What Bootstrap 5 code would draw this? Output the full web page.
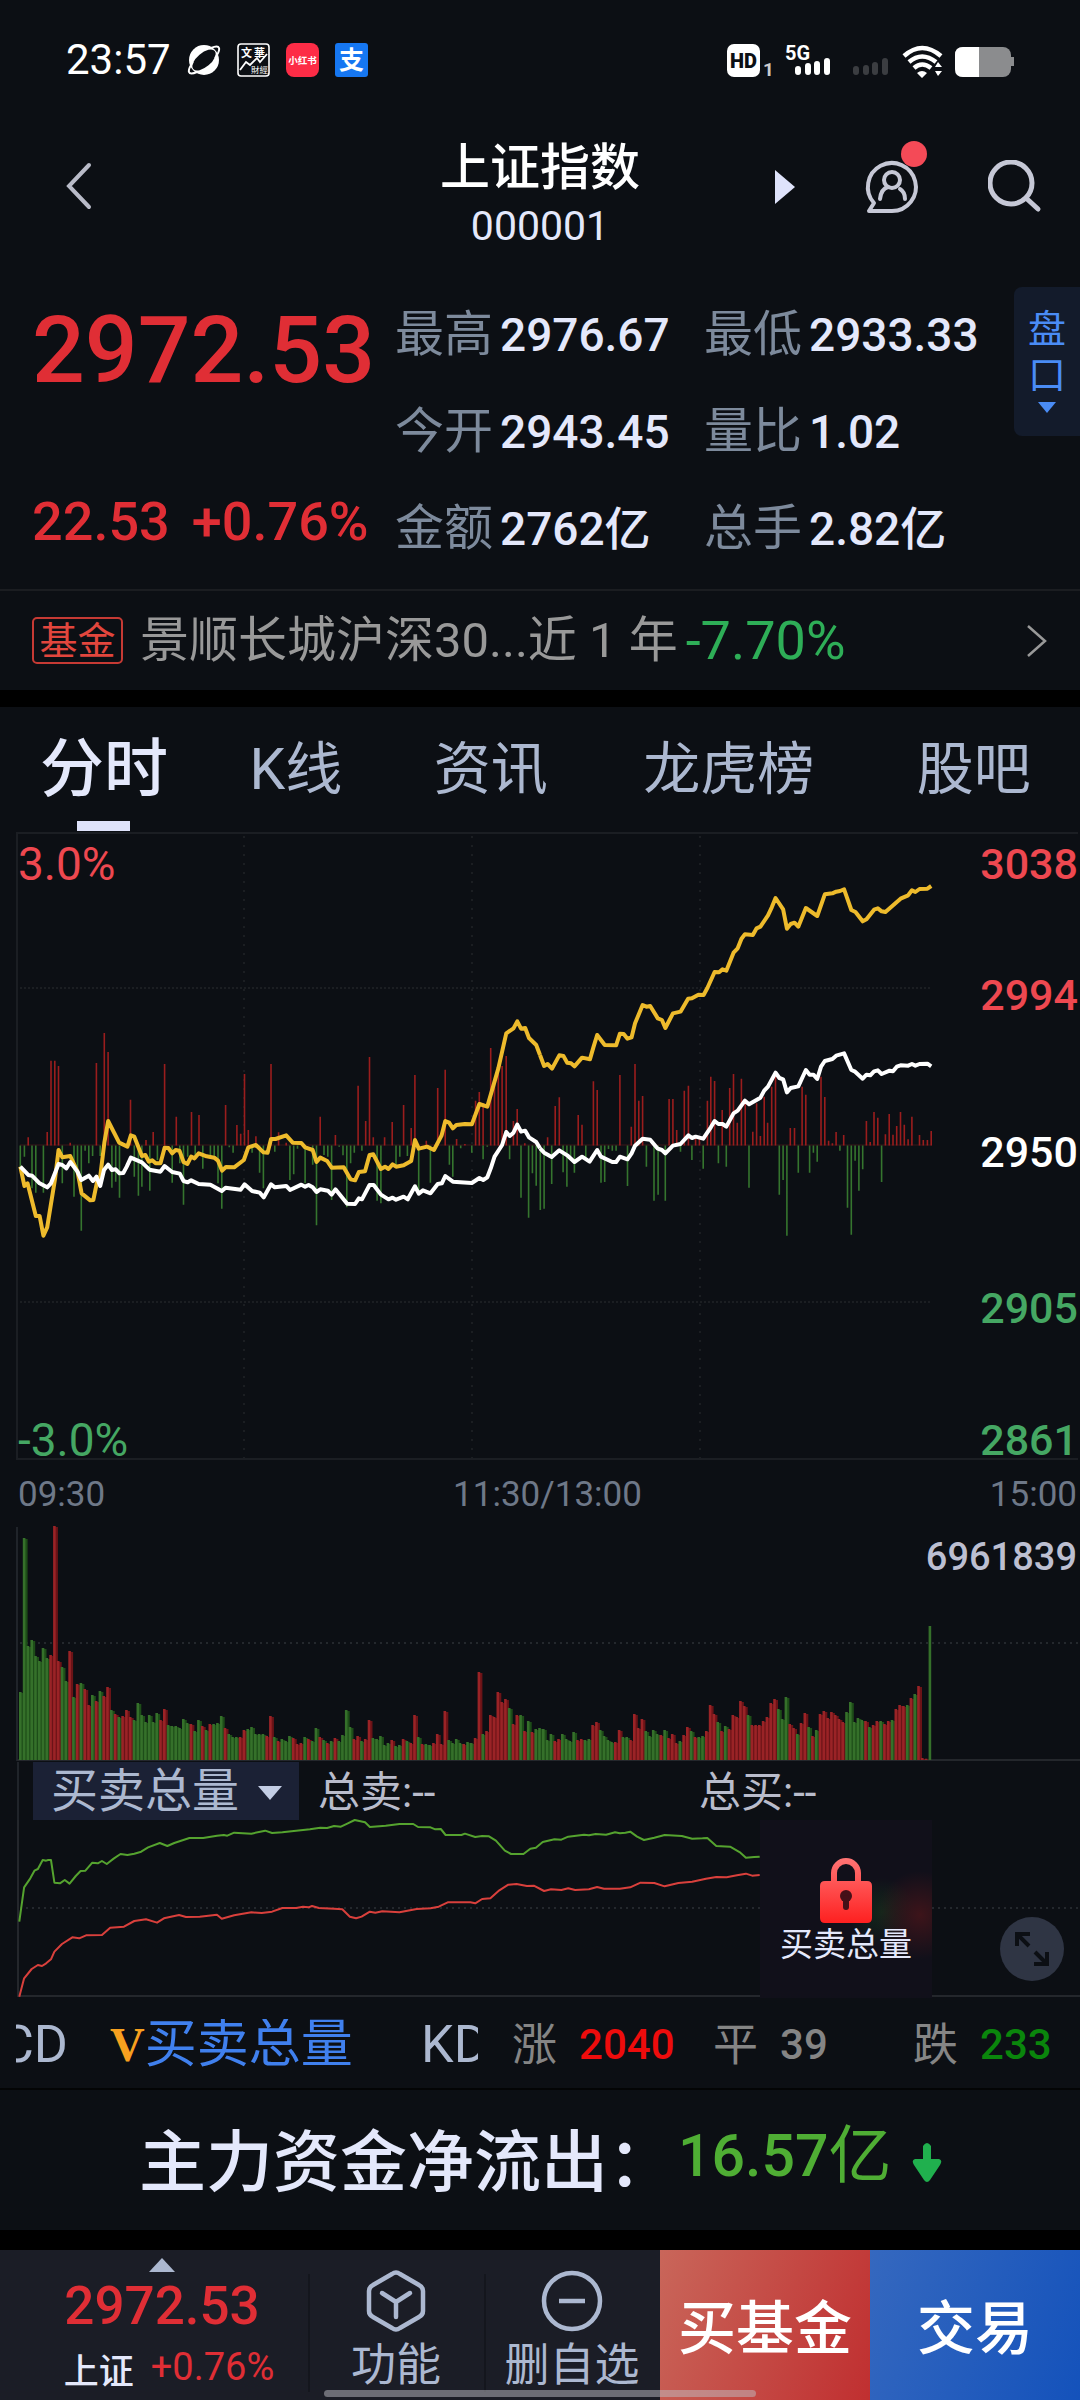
<!DOCTYPE html>
<html lang="zh-CN" data-bs-theme="dark">
<head>
<meta charset="utf-8">
<meta name="viewport" content="width=device-width, initial-scale=1">
<title>上证指数 000001</title>
<link href="https://cdn.jsdelivr.net/npm/bootstrap@5.3.0/dist/css/bootstrap.min.css" rel="stylesheet">
<style>
  :root { --ink:#e4e8fb; --muted:#7d8a9c; --soft:#acb8d0; --up:#e02e35; --panel:#0c0f14; }
  body { background:var(--panel); color:var(--ink); font-family:Roboto,"Noto Sans CJK SC",sans-serif; font-size:42px; line-height:1; }
  svg { display:block; flex:none; }
  a, button { color:inherit; text-decoration:none; line-height:1; }
  button { background:none; border:0; padding:0; }
  .statusbar { height:120px; padding:0 64px 0 66px; color:#fff; }
  .topbar { height:130px; display:grid; grid-template-columns:1fr 220px 1fr; }
  .topbar h1 { font-size:50px; line-height:62px; font-weight:500; }
  .topbar .code-no { font-size:41px; line-height:54px; }
  .topbar .end-tools { gap:62px; padding-right:38px; }
  .quote { padding:36px 0 14px 32px; height:341px; border-bottom:2px solid #1b1d21; }
  .quote-main { width:363px; color:var(--up); font-weight:500; }
  .price-lg { font-size:93px; line-height:130px; }
  .price-chg { font-size:54px; line-height:60px; margin-top:76px; gap:22px; }
  .facts { display:grid; grid-template-columns:309px 300px; grid-auto-rows:97px; margin:0; }
  .facts > div { display:flex; align-items:center; gap:7px; }
  .facts dt { font-size:49px; font-weight:400; color:var(--muted); }
  .facts dd { font-size:46px; font-weight:500; margin:0; }
  .side-tab { width:66px; height:149px; background:#131b2b; color:#4a8cf5; font-size:38px; border-radius:8px 0 0 8px; gap:8px; margin-left:auto; margin-top:1px; }
  .fund { height:99px; padding:0 32px; font-size:49px; color:#999; }
  .fund-tag { font-size:38px; color:#e2463d; border:2px solid #c63a34; border-radius:5px; width:91px; height:47px; }
  .fund-loss { color:#2eae57; font-size:54px; }
  .gapbar { background:#000; }
  .tabs { height:125px; display:grid; grid-template-columns:209fr 184fr 209fr 273fr 163fr; padding-left:40px; color:var(--soft); font-size:57px; }
  .tabs a { display:flex; align-items:center; position:relative; }
  .tabs .on { color:var(--ink); font-size:64px; font-weight:500; }
  .tabs .on::after { content:""; position:absolute; left:37px; bottom:1px; width:53px; height:10px; background:#dfe3fb; }
  .plot > svg { width:100%; height:auto; }
  .plot > svg path, .plot > svg polyline { fill:none; vector-effect:non-scaling-stroke; }
  .axis { position:absolute; top:8px; display:grid; grid-template-rows:131px 157px 156px 132px 48px; font-weight:500; font-size:43px; line-height:48px; }
  .axis-pct { font-size:46px; font-weight:400; }
  .red-t { color:#ee4850; } .green-t { color:#45a763; }
  .times { height:65px; padding:3px 3px 0 18px; font-size:35px; color:#6e7888; display:grid; grid-template-columns:1fr auto 1fr; align-items:center; }
  .vol-max { position:absolute; right:3px; top:10px; font-size:38px; line-height:44px; color:#bcbfd1; font-weight:500; }
  .legend-row { height:58px; margin-left:17px; border-left:2px solid #20242a; padding-left:14px; font-size:42px; color:#b9bccb; display:grid; grid-template-columns:285px 381px 1fr; align-items:center; }
  .legend-row > span { padding-top:4px; }
  .pick { width:266px; height:58px; background:#1b2135; color:var(--soft); font-size:47px; line-height:58px; border:0; border-radius:0; appearance:none; padding:0 0 0 18px; }
  .pick-arrow { position:absolute; left:225px; top:24px; pointer-events:none; }
  .lock-box { position:absolute; left:760px; top:0; width:172px; height:178px; background:radial-gradient(circle at 160px 95px,#3d141a 0,transparent 44px),radial-gradient(circle at 122px 92px,#12281b 0,transparent 34px),#11101a; font-size:33px; padding-top:38px; gap:4px; color:var(--ink); }
  .grow-btn { position:absolute; right:16px; top:97px; width:64px; height:64px; border-radius:50%; background:#2f3544; }
  .strip { height:92px; padding:4px 0 0 16px; border-bottom:2px solid #030405; }
  .scroller { width:462px; overflow:hidden; white-space:nowrap; font-size:52px; color:var(--soft); }
  .scroller .prev-ind { margin-left:-16px; width:110px; }
  .scroller .cur-ind { color:#4080ee; width:311px; }
  .vmark { font-family:"Liberation Serif",serif; font-weight:700; font-size:48px; color:#f7a01f; }
  .counts { display:grid; grid-template-columns:201px 200px 1fr; margin-left:34px; font-size:45px; color:#858585; }
  .counts span { display:flex; align-items:center; gap:22px; }
  .counts b { font-weight:500; font-size:42px; }
  .netflow { height:140px; padding:6px 0 0 139px; font-size:67px; font-weight:500; }
  .netflow .amt { color:#4fae34; font-size:59px; padding-bottom:16px; margin-left:3px; }
  .netflow .amt span { font-size:63px; font-weight:400; }
  .netflow svg { margin-left:20px; }
  .dock { height:150px; background:#1b1d26; color:var(--soft); }
  .dock-idx { width:308px; color:var(--up); padding:8px 0 0 16px; }
  .dock-idx .val { font-size:53px; line-height:68px; font-weight:500; }
  .dock-idx .sub { font-size:38px; line-height:54px; gap:17px; font-weight:400; padding-left:14px; }
  .dock-idx .sub span { color:var(--ink); font-size:35px; padding-top:6px; font-weight:500; }
  .dock-btn { width:176px; font-size:45px; position:relative; padding-top:20px; gap:11px; }
  .dock-btn::before { content:""; position:absolute; left:0; top:24px; bottom:8px; width:2px; background:#14161d; }
  .cta { flex:1; color:#fff; font-size:58px; font-weight:500; padding-top:8px; }
  .cta-fund { background:linear-gradient(110deg,#c9665a,#c02f30); }
  .cta-trade { background:linear-gradient(110deg,#3568bf,#1452bb); }
  .homebar { position:absolute; left:30%; width:40%; bottom:3px; height:7px; border-radius:4px; background:rgba(190,190,195,.5); }
</style>
<script src="https://cdn.jsdelivr.net/npm/bootstrap@5.3.0/dist/js/bootstrap.bundle.min.js"></script>
</head>
<body>

<div class="statusbar d-flex align-items-center">
  <span>23:57</span>
  <div class="d-flex align-items-center ms-3" style="gap:16px">
    <svg width="34" height="34" viewBox="0 0 34 34"><circle cx="17" cy="17" r="15" fill="#fff"/><ellipse cx="17" cy="17" rx="14" ry="7" transform="rotate(-40 17 17)" fill="#0c0f14"/><path d="M24 5Q31 2 32 5T28 15M10 29Q3 32 2 29T6 19" stroke="#fff" stroke-width="2" fill="none"/></svg>
    <svg width="33" height="34" viewBox="0 0 33 34"><rect x="1" y="1" width="31" height="32" rx="3" fill="none" stroke="#fff" stroke-width="1.6"/><text x="4" y="14" font-size="11" font-weight="700" fill="#fff">文</text><text x="17" y="14" font-size="11" font-weight="700" fill="#fff">華</text><path d="M3 27L9 19L13 22L20 15L23 19L30 11" stroke="#fff" stroke-width="1.8" fill="none"/><text x="14" y="30" font-size="8.5" fill="#fff">財經</text></svg>
    <svg width="33" height="34" viewBox="0 0 33 34"><rect width="33" height="34" rx="8" fill="#fd2c46"/><text x="16.500" y="21" text-anchor="middle" font-size="9.500" font-weight="700" fill="#fff">小红书</text></svg>
    <svg width="33" height="34" viewBox="0 0 33 34"><rect width="33" height="34" rx="3" fill="#1677f2"/><text x="16.500" y="26" text-anchor="middle" font-size="25" font-weight="700" fill="#fff">支</text></svg>
  </div>
  <svg class="ms-auto" width="290" height="42" viewBox="726 38 290 42">
    <rect x="727" y="43" width="33" height="33" rx="7" fill="#fff"/><text x="743.500" y="67" text-anchor="middle" font-size="20" font-weight="900" fill="#0c0f14">HD</text>
    <text x="763" y="75" font-size="19" font-weight="700" fill="#ccc">1</text>
    <text x="785" y="59" font-size="20" font-weight="700" fill="#fff">5G</text>
    <g stroke="#fff" stroke-width="6" stroke-linecap="round"><path d="M798 68v3M808 65v6M817 63v8M827 60v11"/><path stroke="#3b3d41" d="M856 68v3M866 67v4M875 64v7M885 60v11"/></g>
    <g fill="none" stroke="#fff" stroke-width="4.500"><path d="M904 55Q922 39 941 55"/><path d="M909 61Q922 50 936 61"/><path d="M914 67Q922 60 931 67"/></g>
    <path d="M917 72Q922 68 927 72L922 77ZM935 66L938 61L942 66ZM935 70H942L938 75Z" fill="#fff"/>
    <rect x="955" y="46" width="56" height="30" rx="8" fill="#8b8c8e"/><path d="M979 46h-16q-8 0-8 8v14q0 8 8 8h16z" fill="#fff"/><path d="M1011 56h3v9h-3z" fill="#8b8c8e"/>
  </svg>
</div>

<header class="topbar">
  <div class="d-flex align-items-center" style="padding-left:64px;padding-bottom:2px">
    <button type="button" aria-label="返回"><svg width="30" height="48" viewBox="0 0 30 48"><path d="M25 3L5 24L25 45" fill="none" stroke="#b9bbc8" stroke-width="4" stroke-linecap="round"/></svg></button>
  </div>
  <div class="text-center" style="padding-top:17px">
    <h1 class="m-0">上证指数</h1>
    <div class="code-no">000001</div>
  </div>
  <div class="end-tools d-flex align-items-center justify-content-end">
    <button type="button" aria-label="下一只"><svg width="22" height="34" viewBox="0 0 22 34"><path d="M1 0L21 17L1 34Z" fill="#dfe3fb"/></svg></button>
    <button type="button" aria-label="消息"><svg width="68" height="74" viewBox="2 0 68 74" fill="none" stroke="#c6c8d6" stroke-width="4" stroke-linejoin="round" stroke-linecap="round" overflow="visible"><path d="M36 61H13L18 53A24 24 0 1 1 36 61Z"/><circle cx="36" cy="30" r="8"/><path d="M24 49Q25 39 32 37M44 39Q49 42 49 49"/><circle cx="58" cy="4" r="13" fill="#f44a57" stroke="none"/></svg></button>
    <button type="button" aria-label="搜索"><svg width="54" height="54" viewBox="0 0 54 54" fill="none" stroke="#c6c8d6" stroke-width="5"><circle cx="23" cy="23" r="21"/><path d="M38 38L50 49" stroke-linecap="round"/></svg></button>
  </div>
</header>

<section class="quote d-flex">
  <div class="quote-main">
    <div class="price-lg">2972.53</div>
    <div class="price-chg d-flex"><span>22.53</span><span>+0.76%</span></div>
  </div>
  <dl class="facts">
    <div><dt>最高</dt><dd>2976.67</dd></div><div><dt>最低</dt><dd>2933.33</dd></div>
    <div><dt>今开</dt><dd>2943.45</dd></div><div><dt>量比</dt><dd>1.02</dd></div>
    <div><dt>金额</dt><dd>2762亿</dd></div><div><dt>总手</dt><dd>2.82亿</dd></div>
  </dl>
  <button type="button" class="side-tab d-flex flex-column align-items-center justify-content-center"><span>盘</span><span>口</span><svg width="18" height="12" viewBox="0 0 18 12"><path d="M0 0H18L9 11Z" fill="#4a8cf5"/></svg></button>
</section>

<a href="#" class="fund d-flex align-items-center">
  <span class="fund-tag d-flex align-items-center justify-content-center">基金</span>
  <span style="margin-left:17px">景顺长城沪深30...近 1 年</span>
  <span class="fund-loss ms-2">-7.70%</span>
  <svg class="ms-auto" width="22" height="34" viewBox="0 0 22 34"><path d="M2 2L19 17L2 32" fill="none" stroke="#999" stroke-width="2.500"/></svg>
</a>
<div class="gapbar" style="height:17px"></div>

<nav class="tabs">
  <a href="#" class="on">分时</a><a href="#">K线</a><a href="#">资讯</a><a href="#">龙虎榜</a><a href="#">股吧</a>
</nav>

<section class="plot position-relative">
  <svg viewBox="0 0 1080 628">
    <path d="M1078 1H17V627H1078" stroke="#1b1e23" stroke-width="2"/>
    <path d="M244 4V626M472 4V626M700 4V626" stroke="#1b1e22" stroke-width="2" stroke-dasharray="2 7"/>
    <path d="M20 156H932M20 470H932" stroke="#1b1e22" stroke-width="2" stroke-dasharray="2 2"/>
    <g id="minutes"></g>
    <g transform="translate(0 -12) scale(.34439 .33333)" stroke-width="4" stroke-linejoin="round">
      <polyline stroke="#eebb2c" points="59,1040 71,1098 80,1090 104,1188 115,1188 126,1247 137,1222 160,1075 170,990 181,1012 204,1008 225,1055 237,1120 262,1141 271,1140 282,1085 291,1070 303,968 314,903 346,968 370,980 380,946 390,950 412,1008 422,1005 432,1025 442,1021 452,1030 466,1030 478,983 489,984 500,1000 510,990 521,992 533,1026 544,1032 555,1010 565,1015 577,1000 600,1009 622,1013 633,1022 645,1052 656,1041 680,1042 708,1020 721,982 743,975 765,997 777,998 787,957 800,957 831,946 850,968 875,969 886,982 908,990 919,1026 930,1013 950,1023 963,1043 998,1042 1018,1078 1031,1081 1042,1056 1060,1054 1073,1005 1084,1003 1106,1047 1118,1040 1128,1047 1140,1033 1150,1040 1172,1036 1194,1023 1205,960 1216,986 1240,980 1260,990 1282,947 1293,903 1304,908 1315,925 1325,915 1350,912 1370,913 1392,852 1415,860 1447,745 1470,640 1491,625 1502,604 1513,626 1525,624 1536,654 1557,675 1568,705"/>
      <polyline stroke="#fff" points="59,1040 82,1065 93,1067 115,1090 137,1102 148,1090 170,1032 181,1035 193,1045 204,1026 225,1055 236,1080 258,1067 270,1083 280,1070 291,1098 302,1050 314,1034 325,1050 336,1048 347,1060 358,1059 368,1040 380,1013 412,1027 434,1049 466,1055 478,1038 500,1056 522,1061 533,1083 545,1087 555,1081 577,1092 611,1094 644,1113 655,1103 699,1109 710,1093 732,1113 754,1118 766,1132 787,1093 798,1102 831,1098 842,1110 875,1094 886,1100 896,1095 908,1102 919,1116 930,1108 952,1112 963,1124 974,1108 1008,1151 1031,1152 1042,1135 1051,1138 1073,1095 1085,1095 1106,1124 1128,1138 1140,1133 1150,1139 1172,1130 1184,1138 1205,1099 1216,1121 1228,1111 1250,1120 1271,1092 1283,1090 1293,1068 1315,1085 1370,1089 1392,1074 1403,1080 1415,1072 1425,1045 1436,1010 1458,975 1470,936 1480,948 1491,938 1502,914 1513,935 1525,932 1536,952 1557,966 1568,985"/>
    </g>
    <g transform="translate(540 -12) scale(.34439 .33333)" stroke-width="4" stroke-linejoin="round">
      <polyline stroke="#eebb2c" points="0,705 12,738 22,732 35,746 56,706 68,708 79,728 90,730 100,739 122,713 145,718 155,682 166,645 188,675 221,676 232,641 243,642 254,656 266,652 276,610 298,555 309,560 320,558 342,595 354,600 364,624 386,580 408,575 430,536 441,535 460,524 475,525 486,504 507,456 520,457 530,448 541,452 562,398 574,385 585,356 595,343 618,345 629,325 640,320 662,286 673,262 684,234 706,268 717,326 728,312 739,308 750,320 772,264 805,288 827,223 849,220 860,215 871,213 883,208 904,270 916,276 937,304 948,298 970,269 981,265 992,274 1003,276 1047,236 1069,226 1080,211 1090,216 1102,207 1125,206 1136,198"/>
      <polyline stroke="#fff" points="0,985 12,998 34,1011 56,991 79,1006 100,1026 122,1010 144,1025 166,990 177,1010 210,1026 221,1026 232,1010 254,1018 266,1000 276,977 298,956 320,959 342,986 354,990 364,1000 386,977 408,972 431,946 441,954 452,950 474,956 496,922 507,903 518,912 530,912 541,920 562,880 574,872 595,842 607,853 640,833 651,812 662,800 684,758 695,774 706,778 717,817 728,804 750,799 772,750 783,764 794,764 805,777 816,740 827,723 849,717 860,707 883,700 904,750 915,755 937,776 948,764 959,766 970,754 981,751 992,762 1015,752 1025,754 1036,740 1047,736 1069,737 1080,732 1090,737 1102,732 1125,731 1136,739"/>
    </g>
  </svg>
  <div class="axis axis-pct" style="left:18px"><span class="red-t">3.0%</span><span></span><span></span><span></span><span class="green-t">-3.0%</span></div>
  <div class="axis text-end" style="right:2px"><span class="red-t">3038</span><span class="red-t">2994</span><span class="text-white">2950</span><span class="green-t">2905</span><span class="green-t">2861</span></div>
</section>

<div class="times"><span>09:30</span><span>11:30/13:00</span><span class="text-end">15:00</span></div>

<section class="plot position-relative">
  <svg viewBox="0 0 1080 237">
    <path d="M17 2V236" stroke="#20242a" stroke-width="2"/><path d="M17 235H1080" stroke="#24272c" stroke-width="2"/>
    <path d="M20 118H1080" stroke="#24282d" stroke-width="2" stroke-dasharray="2 4"/>
    <g id="volume"></g>
  </svg>
  <div class="vol-max">6961839</div>
</section>

<div class="legend-row">
  <div class="position-relative">
    <select class="pick" aria-label="指标"><option>买卖总量</option></select>
    <svg class="pick-arrow" width="24" height="14" viewBox="0 0 24 14"><path d="M0 0H24L12 14Z" fill="#c3cde4"/></svg>
  </div>
  <span>总卖:--</span><span>总买:--</span>
</div>
<section class="plot position-relative">
  <svg viewBox="0 0 1080 178" overflow="visible">
    <path d="M18 0V176H1080" stroke="#24272c" stroke-width="2"/>
    <path d="M20 88H1080" stroke="#24282d" stroke-width="2" stroke-dasharray="2 4"/>
    <g transform="translate(0 -70) scale(.68875 .33333)" stroke-width="2" stroke-linejoin="round">
      <polyline stroke="#55a32f" points="28,515 35,412 44,385 50,362 55,357 62,330 67,332 70,330 74,330 79,398 87,400 94,390 101,401 110,378 117,363 124,362 134,338 142,340 148,333 155,342 165,326 175,312 185,315 195,311 205,305 215,292 232,279 243,288 253,279 275,264 295,264 315,257 325,255 330,257 340,248 365,251 385,242 395,249 410,247 450,238 465,233 475,234 485,228 495,230 505,220 515,210 530,217 537,231 560,227 580,222 600,222 607,231 625,232 632,238 640,237 647,255 670,255 675,251 690,261 700,258 710,259 720,272 733,302 742,312 760,312 770,296 778,293 788,276 805,268 815,269 825,260 848,254 855,256 865,252 880,254 893,247 900,250 908,248 915,245 925,260 935,270 950,263 965,255 990,258 1005,266 1020,265 1027,264 1040,288 1060,290 1075,308 1083,323 1095,321 1103,320"/>
      <polyline stroke="#d9403c" points="28,740 35,685 46,657 55,645 61,648 67,640 74,628 79,605 90,582 105,562 115,565 125,556 148,555 160,533 180,530 195,513 212,508 228,518 238,505 260,495 270,501 290,500 315,494 322,506 340,496 365,487 380,489 395,485 410,474 430,474 440,470 448,472 453,468 463,474 485,476 497,478 508,500 517,505 525,500 537,485 545,488 555,484 580,487 605,477 625,475 637,470 650,457 683,457 690,460 700,447 712,445 725,421 738,404 750,402 765,408 775,407 790,423 800,418 815,420 825,415 835,420 855,418 867,411 877,416 900,416 915,412 930,398 950,399 965,409 985,399 1005,395 1025,386 1040,381 1055,382 1070,376 1083,371 1092,377 1103,375"/>
    </g>
  </svg>
  <button type="button" class="lock-box d-flex flex-column align-items-center">
    <svg width="52" height="66" viewBox="0 0 52 66"><defs><linearGradient id="lk" x2="0" y2="1"><stop stop-color="#ff7474"/><stop offset="1" stop-color="#fe2020"/></linearGradient></defs><path fill="url(#lk)" fill-rule="evenodd" d="M11 23V15a15 15 0 0 1 30 0v8h6q5 0 5 5v32q0 5-5 5H5q-5 0-5-5V28q0-5 5-5zM17 23H35V15a9 9 0 0 0-18 0z"/><circle cx="26" cy="38" r="6" fill="#461018"/><path d="M26 40v9" stroke="#461018" stroke-width="6" stroke-linecap="round"/></svg>
    <span>买卖总量</span>
  </button>
  <button type="button" class="grow-btn d-flex align-items-center justify-content-center" aria-label="全屏"><svg width="36" height="36" viewBox="0 0 36 36"><path d="M3 15V3H16M3 3L15 15M33 21V33H20M33 33L21 21" fill="none" stroke="#0c0f14" stroke-width="4"/></svg></button>
</section>

<div class="strip d-flex align-items-center">
  <div class="scroller d-flex align-items-center">
    <a href="#" class="prev-ind flex-shrink-0">CD</a>
    <a href="#" class="cur-ind flex-shrink-0 d-flex align-items-center"><span class="vmark">V</span>买卖总量</a>
    <a href="#">KD</a>
  </div>
  <div class="counts flex-fill"><span>涨<b style="color:#ee0c0c">2040</b></span><span>平<b>39</b></span><span>跌<b style="color:#0a860c">233</b></span></div>
</div>

<section class="netflow d-flex align-items-center">
  <span>主力资金净流出：</span>
  <span class="amt d-flex align-items-center">16.57<span>亿</span></span>
  <svg width="30" height="42" viewBox="0 0 30 42"><path d="M11 4q4-6 8 0V17h8q4 1 1 6L18 38q-3 4-6 0L2 23q-3-5 1-6h8z" fill="#20b04e"/></svg>
</section>
<div class="gapbar" style="height:20px"></div>

<footer class="dock d-flex position-relative">
  <a href="#" class="dock-idx">
    <svg class="mx-auto" width="26" height="14" viewBox="0 0 26 14"><path d="M0 14L13 0L26 14Z" fill="#acb8d0"/></svg>
    <div class="val text-center">2972.53</div>
    <div class="sub d-flex justify-content-center"><span>上证</span>+0.76%</div>
  </a>
  <button type="button" class="dock-btn d-flex flex-column align-items-center"><svg width="60" height="62" viewBox="0 0 60 62" fill="none" stroke="#acb8d0" stroke-width="4.500" stroke-linejoin="round" stroke-linecap="round"><path d="M26 4Q30 1 34 4L53 15Q57 17 57 21V41Q57 45 53 47L34 58Q30 61 26 58L7 47Q3 45 3 41V21Q3 17 7 15Z"/><path d="M16 23L30 32L44 23M30 32V47"/></svg>功能</button>
  <button type="button" class="dock-btn d-flex flex-column align-items-center"><svg width="62" height="62" viewBox="0 0 62 62" fill="none" stroke="#acb8d0" stroke-width="4.500"><circle cx="31" cy="31" r="28"/><path d="M18 31H44"/></svg>删自选</button>
  <button type="button" class="cta cta-fund">买基金</button>
  <button type="button" class="cta cta-trade">交易</button>
  <div class="homebar"></div>
</footer>

<script>
  // Tick momentum per minute: x:y pairs around the zero line at y = 977.
  const momentum = {
    left: {
      up: "82:952 137:936 148:722 159:722 170:738 204:968 280:729 303:639 314:696 379:839 424:960 445:936 478:732 512:890 556:876 578:885 655:855 688:915 699:941 710:762 721:930 743:949 787:732 809:937 831:968 930:890 974:945 1040:797 1062:903 1073:711 1084:952 1117:952 1139:906 1172:855 1194:924 1205:765 1238:962 1271:804 1293:749 1326:957 1350:972 1381:842 1392:816 1403:850 1425:684 1436:780 1447:750 1458:738 1470:708 1491:903 1502:867 1524:970",
      down: "59:1040 71:1010 93:1105 104:1118 126:1118 181:1090 215:1130 225:1060 236:1232 247:992 258:1030 269:1008 291:1008 325:1103 336:1085 347:1133 390:1070 402:1127 412:1100 435:1112 457:1020 500:1088 522:1030 533:1154 545:1010 567:1010 589:1046 611:1005 622:1010 633:1090 644:1166 666:982 677:998 732:998 754:1058 765:1105 798:995 842:1080 853:1063 864:986 886:1090 908:1034 919:1216 941:1005 952:1010 963:1140 985:980 996:1006 1007:1162 1018:1030 1029:998 1051:992 1095:1142 1106:1150 1150:1040 1161:1010 1183:1008 1216:1115 1250:1088 1305:1034 1315:1070 1338:985 1370:998 1403:1018 1415:980 1480:1018 1513:1133 1535:1193 1546:1060 1557:1097"
    },
    right: {
      up: "22:952 44:858 56:832 111:885 122:914 155:784 166:810 232:765 265:920 276:732 287:842 298:828 375:837 386:837 397:930 419:812 431:797 452:950 463:950 486:842 496:770 507:783 529:870 551:804 562:762 573:908 585:776 596:850 618:935 629:850 640:948 651:830 661:908 673:800 684:765 727:924 739:924 761:800 772:824 816:770 827:831 838:962 849:970 860:936 882:945 948:903 959:966 970:876 981:893 1003:943 1014:882 1025:944 1036:918 1047:876 1058:914 1069:958 1080:890 1102:945 1113:960 1125:960 1136:933",
      down: "1:1170 12:1166 34:1092 67:1057 78:1100 89:1010 100:1058 133:1020 177:1088 188:1086 199:987 210:992 221:992 254:1098 309:1040 331:1142 343:1124 364:1142 408:995 441:1020 474:1046 518:1030 541:1040 607:1103 695:1124 706:1080 717:1247 750:1058 783:1058 794:998 805:1025 871:992 893:1163 904:1244 915:1022 926:1112 937:1048 992:1086"
    }
  };
  const bars = (list, dx) => list.split(" ").map(p => {
    const [x, y] = p.split(":").map(Number);
    return `M${(dx + x / 2.904).toFixed(1)} 313.500V${(y / 3 - 12).toFixed(1)}`;
  }).join("");
  document.getElementById("minutes").innerHTML =
    `<path d="M20 313H932" stroke="#3a1618" stroke-width="1"/>` +
    `<path stroke="#9a1d1d" stroke-width="1.600" d="${bars(momentum.left.up, 0)}${bars(momentum.right.up, 540)}"/>` +
    `<path stroke="#35752e" stroke-width="1.600" d="${bars(momentum.left.down, 0)}${bars(momentum.right.down, 540)}"/>`;

  // Volume per minute: direction letter and top of the bar, baseline 780.
  const volume = "g576 g114 g438 g420 g468 g483 g444 g474 r465 r78 r483 g501 g543 r453 g591 r552 g549 r567 r615 g585 r603 g573 r588 r561 g630 r642 g651 r648 r630 r651 g660 g609 g645 g666 g645 g666 g639 r660 r627 g675 g678 g678 g684 g657 g669 r672 g693 g660 r678 g690 r672 g672 g669 g648 r684 g702 g711 g711 r711 r690 g687 g681 g702 g702 g702 r708 r648 g711 r723 g717 g723 g708 r714 r732 r729 g711 r717 g723 g684 r711 g720 r729 g723 r714 g723 g705 g630 g681 r717 r708 g723 r717 r660 g714 g717 g708 g735 g729 r720 g738 g735 r717 g723 r729 r645 g711 r732 g732 g735 r729 r702 r732 r633 g720 g729 g717 g729 r732 g726 g729 r714 r516 g702 r693 r645 r651 r576 r606 r597 g624 r672 r645 g645 r693 g663 r696 g687 g684 g687 g720 g702 r723 r717 g702 g717 g723 g696 r720 r717 g720 g717 r675 r666 g690 g708 g720 g726 r726 r690 g711 g711 r720 r642 r684 r657 g693 g708 g690 g702 r705 g690 r714 r702 r729 g723 r705 r681 g693 r711 g711 g708 r693 r615 r642 g666 r693 g678 r687 r645 r651 r603 r618 g645 r675 r675 r675 r663 r651 r609 r597 g627 g657 g591 r672 r684 g702 r669 r639 g681 r708 g690 r642 r633 r654 r636 r645 r657 r666 g636 g606 g666 g654 g660 r663 g681 r675 r663 g663 r672 r663 g660 r627 r615 r618 g615 r594 g582 r558 r774 r776 g378".split(" ");
  const tone = { g: ["#1d4d18", "#35702a"], r: ["#6b1317", "#9a2326"] };
  document.getElementById("volume").innerHTML = volume.map((v, i) => {
    const x = 20 + i * 3.79, top = Number(v.slice(1)) / 3 - 25, [dark, lit] = tone[v[0]];
    const side = i === 240 ? "" : `<rect x="${(x + 1).toFixed(1)}" y="${(top + 1).toFixed(1)}" width="2.800" height="${(234 - top).toFixed(1)}" fill="${dark}"/>`;
    return side + `<rect x="${(x - 1).toFixed(1)}" y="${top.toFixed(1)}" width="2.600" height="${(235 - top).toFixed(1)}" fill="${lit}"/>`;
  }).join("");
</script>
</body>
</html>
